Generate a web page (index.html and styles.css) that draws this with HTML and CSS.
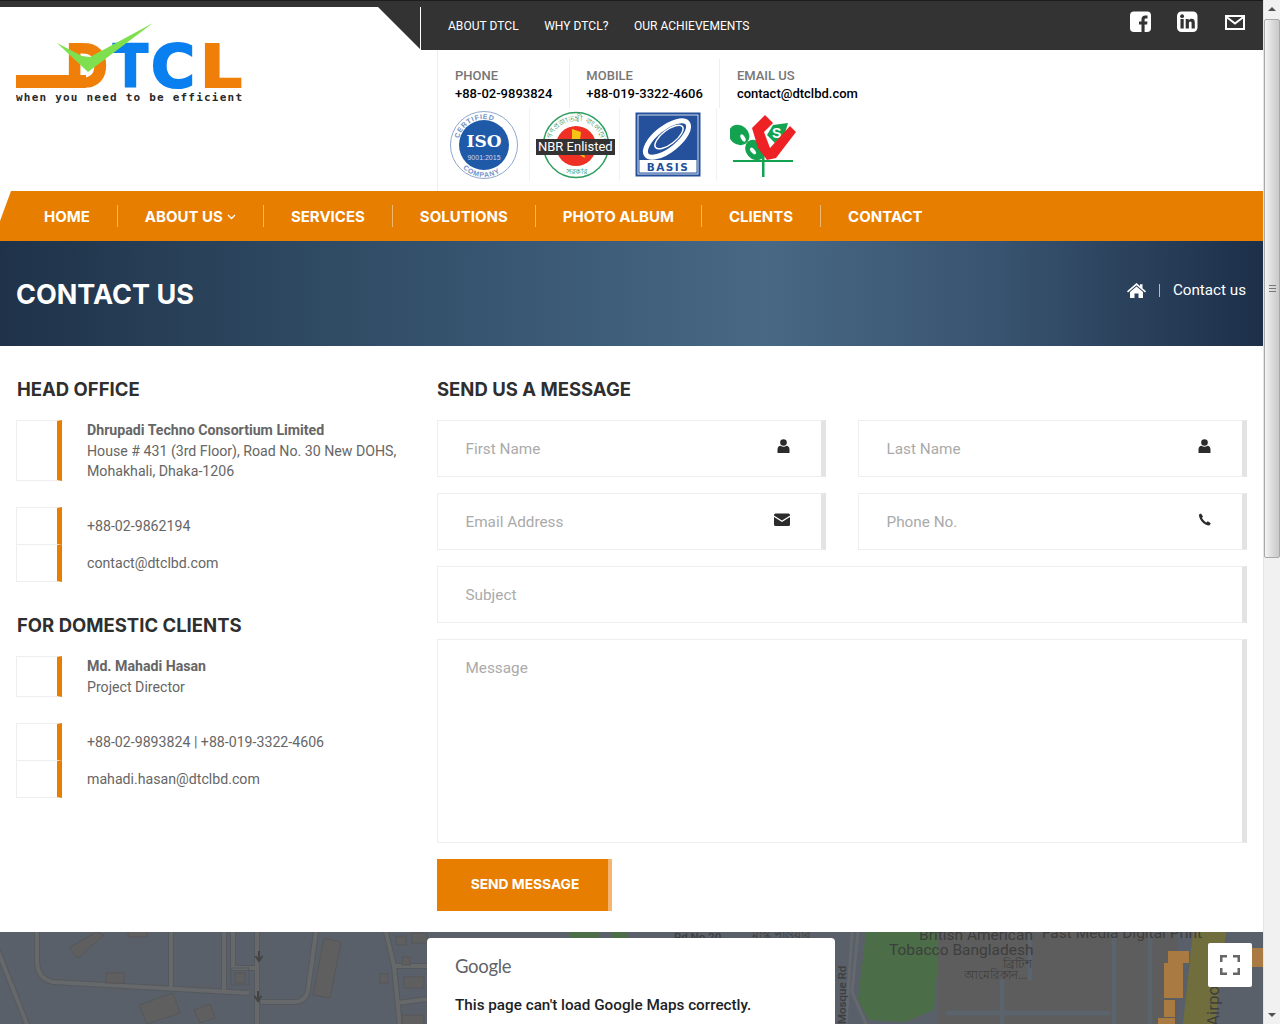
FILE: index.html
```html
<!DOCTYPE html>
<html lang="en">
<head>
<meta charset="utf-8">
<title>Contact Us - DTCL</title>
<link rel="stylesheet" href="styles.css">
</head>
<body>
<div class="page">
  <header class="header">
    <div class="brand-col">
      <div class="brand">
        <svg class="logo" width="240" height="90" viewBox="0 0 240 90">
          <rect x="0" y="52" width="70" height="13" fill="#f07f09"/>
          <text class="logo-letter logo-orange" x="49" y="64" textLength="43" lengthAdjust="spacingAndGlyphs">D</text>
          <text class="logo-letter logo-blue" x="97" y="64" textLength="35" lengthAdjust="spacingAndGlyphs">T</text>
          <text class="logo-letter logo-blue" x="135" y="64" textLength="44" lengthAdjust="spacingAndGlyphs">C</text>
          <text class="logo-letter logo-orange" x="184" y="64" textLength="42" lengthAdjust="spacingAndGlyphs">L</text>
          <polygon points="41,20 72,49 137,0 74,34 66,33" fill="#7fe04f"/>
          <text class="logo-tag" x="0" y="77.500" textLength="226">when you need to be efficient</text>
        </svg>
      </div>
    </div>
    <div class="header-main">
      <div class="topbar">
        <nav class="topnav">
          <a>ABOUT DTCL</a><a>WHY DTCL?</a><a>OUR ACHIEVEMENTS</a>
        </nav>
        <div class="social">
          <svg class="social-fb" width="22" height="22" viewBox="0 0 22 22"><rect width="21" height="20.500" y="0.500" rx="4" fill="#fff"/><path d="M11.500 21v-7.500H9v-3h2.500V8.300C11.500 5.800 13 4.500 15.200 4.500H17.500v3H16c-1.100 0-1.400.5-1.400 1.300v1.700h2.900l-.4 3h-2.500V21z" fill="#333"/></svg>
          <svg width="21" height="22" viewBox="0 0 21 22"><rect y="0.500" width="20.500" height="20.500" rx="4.500" fill="#fff"/><rect x="3.500" y="8" width="3.200" height="9.500" fill="#333"/><circle cx="5.100" cy="5.200" r="1.900" fill="#333"/><path d="M8.700 8h3v1.400c.7-1.100 1.700-1.600 2.900-1.600 2.300 0 3.200 1.500 3.200 3.900v5.800h-3.200v-5c0-1.100-.3-1.900-1.300-1.900s-1.400.9-1.400 1.900v5H8.700z" fill="#333"/></svg>
          <svg class="social-mail" width="20" height="15" viewBox="0 0 20 15"><rect x="1" y="1" width="18" height="13" fill="#333" stroke="#fff" stroke-width="2"/><path d="M1.500 2l8.500 6.500L18.500 2" fill="none" stroke="#fff" stroke-width="2"/></svg>
        </div>
      </div>
      <div class="contact-strip">
        <div class="info-row">
          <div class="info"><span class="info-label">PHONE</span><span class="info-value">+88-02-9893824</span></div>
          <div class="info info-mid"><span class="info-label">MOBILE</span><span class="info-value">+88-019-3322-4606</span></div>
          <div class="info"><span class="info-label">EMAIL US</span><span class="info-value">contact@dtclbd.com</span></div>
        </div>
        <div class="badges">
          <div class="badge badge-iso">
            <svg width="70" height="70" viewBox="0 0 70 70">
              <defs>
                <path id="isoTop" d="M9 35a26 26 0 0 1 52 0"/>
                <path id="isoBot" d="M5 37a30 30 0 0 0 60 0"/>
              </defs>
              <circle cx="35" cy="35" r="33.500" fill="#fff" stroke="#8fa8d0" stroke-width="1"/>
              <circle cx="35" cy="35" r="25" fill="#1f5aa8"/>
              <text class="iso-curve"><textPath href="#isoTop" startOffset="8%">CERTIFIED</textPath></text>
              <text class="iso-curve"><textPath href="#isoBot" startOffset="25%">COMPANY</textPath></text>
              <text class="iso-main" x="35" y="37" text-anchor="middle">ISO</text>
              <text class="iso-sub" x="35" y="50" text-anchor="middle">9001:2015</text>
            </svg>
          </div>
          <div class="badge badge-nbr">
            <svg width="80" height="70" viewBox="0 0 80 70">
              <defs>
                <path id="nbrTop" d="M15 37a26 26 0 0 1 52 0"/>
              </defs>
              <circle cx="41" cy="35" r="32.500" fill="#fff" stroke="#2e9e5e" stroke-width="1.500"/>
              <circle cx="41" cy="36" r="20" fill="#ee3124"/>
              <path d="M37 19l9 3-1 8 7 3-4 6 2 9-7-4-2-8-7-2 3-6z" fill="#f6c514"/>
              <text class="nbr-curve"><textPath href="#nbrTop" startOffset="10%">গণপ্রজাতন্ত্রী বাংলাদেশ</textPath></text>
              <text class="nbr-low" x="41" y="64" text-anchor="middle">সরকার</text>
            </svg>
            <span class="nbr-tag">NBR Enlisted</span>
          </div>
          <div class="badge badge-basis">
            <svg width="66" height="66" viewBox="0 0 66 66">
              <rect x="0.500" y="0.500" width="65" height="64" fill="#24509c"/>
              <rect x="3" y="3" width="60" height="59" fill="none" stroke="#fff" stroke-width=".8"/>
              <rect x="4.500" y="48" width="57" height="12.500" fill="#fff"/>
              <g fill="none" stroke="#fff">
                <ellipse cx="32" cy="27" rx="26" ry="11" transform="rotate(-38 32 27)" stroke-width="5"/>
                <ellipse cx="34" cy="25" rx="17" ry="7" transform="rotate(-38 34 25)" stroke-width="1.500"/>
              </g>
              <text class="basis-text" x="33" y="59" text-anchor="middle">BASIS</text>
            </svg>
          </div>
          <div class="badge badge-bcs">
            <svg width="66" height="66" viewBox="0 0 66 66">
              <ellipse cx="9" cy="23" rx="11" ry="9.500" transform="rotate(40 9 23)" fill="#13a24f"/>
              <ellipse cx="13" cy="26" rx="2" ry="4" transform="rotate(-30 13 26)" fill="#fff"/>
              <ellipse cx="25" cy="38" rx="11" ry="9" transform="rotate(50 25 38)" fill="#13a24f"/>
              <ellipse cx="23" cy="39" rx="2" ry="4" transform="rotate(-40 23 39)" fill="#fff"/>
              <polygon points="37,23 43,13 58,11 55,21 45,31" fill="#13a24f"/>
              <text class="bcs-s" x="42" y="26">S</text>
              <polygon points="22,16 35,3 43,11 34,20 40,36 60,14 66,20 46,46 37,48 28,36" fill="#ee2124"/>
              <rect x="3" y="48" width="60" height="2" fill="#13a24f"/>
              <rect x="32" y="44" width="2.500" height="21" fill="#13a24f"/>
            </svg>
          </div>
        </div>
      </div>
    </div>
  </header>

  <nav class="mainnav">
    <a>HOME</a>
    <a>ABOUT US <svg class="caret" width="9" height="6" viewBox="0 0 9 6"><path d="M1 1l3.500 3.500L8 1" fill="none" stroke="#fff" stroke-width="1.300"/></svg></a>
    <a>SERVICES</a>
    <a>SOLUTIONS</a>
    <a>PHOTO ALBUM</a>
    <a>CLIENTS</a>
    <a>CONTACT</a>
  </nav>

  <section class="hero">
    <h1>CONTACT US</h1>
    <div class="crumbs">
      <svg width="19" height="15" viewBox="0 0 19 15"><path d="M9.500 0L13 3V1.200h2.500v4L19 8.300l-1 1.100-8.500-7.200L1 9.400 0 8.300z" fill="#fff"/><path d="M9.500 3.500l6.500 5.400V15h-4.500v-4.500h-4V15H3V8.900z" fill="#fff"/></svg>
      <span class="crumb-sep"></span>
      <span>Contact us</span>
    </div>
  </section>

  <main class="content">
    <aside class="offices">
      <h2>HEAD OFFICE</h2>
      <div class="card">
        <div class="card-icon"></div>
        <div class="card-text"><b>Dhrupadi Techno Consortium Limited</b><br>House # 431 (3rd Floor), Road No. 30 New DOHS,<br>Mohakhali, Dhaka-1206</div>
      </div>
      <div class="stack">
        <div class="stack-row"><div class="card-icon"></div><div class="card-text">+88-02-9862194</div></div>
        <div class="stack-row"><div class="card-icon"></div><div class="card-text">contact@dtclbd.com</div></div>
      </div>
      <h2 class="second">FOR DOMESTIC CLIENTS</h2>
      <div class="card card-short">
        <div class="card-icon"></div>
        <div class="card-text"><b>Md. Mahadi Hasan</b><br>Project Director</div>
      </div>
      <div class="stack">
        <div class="stack-row"><div class="card-icon"></div><div class="card-text">+88-02-9893824 | +88-019-3322-4606</div></div>
        <div class="stack-row"><div class="card-icon"></div><div class="card-text">mahadi.hasan@dtclbd.com</div></div>
      </div>
    </aside>
    <section class="message">
      <h2>SEND US A MESSAGE</h2>
      <div class="form-grid">
        <div class="field"><span>First Name</span>
          <svg width="13" height="14" viewBox="0 0 13 14"><circle cx="6.500" cy="3.500" r="3.300" fill="#2b2b2b"/><path d="M.5 14V10.500C.5 8 2 7 3.500 6.800c1.700 1.300 4.300 1.300 6 0C11 7 12.500 8 12.500 10.500V14z" fill="#2b2b2b"/></svg>
        </div>
        <div class="field"><span>Last Name</span>
          <svg width="13" height="14" viewBox="0 0 13 14"><circle cx="6.500" cy="3.500" r="3.300" fill="#2b2b2b"/><path d="M.5 14V10.500C.5 8 2 7 3.500 6.800c1.700 1.300 4.300 1.300 6 0C11 7 12.500 8 12.500 10.500V14z" fill="#2b2b2b"/></svg>
        </div>
        <div class="field"><span>Email Address</span>
          <svg class="icon-mail" width="16" height="13" viewBox="0 0 16 13"><path d="M0 2a1.500 1.500 0 0 1 1.500-1.500h13A1.500 1.500 0 0 1 16 2v.5L8 7.500 0 2.500z" fill="#2b2b2b"/><path d="M0 4l8 5 8-5v7.500A1.500 1.500 0 0 1 14.500 13h-13A1.500 1.500 0 0 1 0 11.500z" fill="#2b2b2b"/></svg>
        </div>
        <div class="field"><span>Phone No.</span>
          <svg class="icon-phone" width="13" height="13" viewBox="0 0 13 13"><path d="M3 .5L1 1.500C.5 6 6 12.500 11.500 12.500l1.300-2.300-3-2-1.500 1.300C6.500 8.500 4.500 6.300 4 4.700L5 3.500z" fill="#2b2b2b"/></svg>
        </div>
        <div class="field wide"><span>Subject</span></div>
        <div class="field wide area"><span>Message</span></div>
      </div>
      <button class="send" type="button">SEND MESSAGE</button>
    </section>
  </main>

  <section class="map">
    <svg class="map-art" width="1263" height="92" viewBox="0 0 1263 92">
      <defs>
        <path id="roads" d="M-4 14L28 95M37 0V28Q37 47 53 50L249 61M171 0V55M224 0V59M233 0V36H257M257 0V95M261 70H294Q306 70 308 58L316 0M386 0L394 34L400 95M394 34H427M398 71L427 67"/>
      </defs>
      <use href="#roads" fill="none" stroke="#55595e" stroke-width="6"/>
      <use href="#roads" fill="none" stroke="#66686a" stroke-width="4"/>
      <g fill="#5f5f60" stroke="#56575a" stroke-width="1">
        <polygon points="69,16 96,0 104,3 78,26"/>
        <rect x="106" y="41" width="18" height="10"/>
        <rect x="128" y="-1" width="19" height="6"/>
        <polygon points="324,6 341,10 330,66 313,63"/>
        <polygon points="139,73 173,61 180,81 147,92"/>
        <polygon points="194,78 210,72 215,86 200,91"/>
        <rect x="235" y="41" width="10" height="10"/>
        <rect x="380" y="42" width="8" height="9"/>
        <rect x="396" y="4" width="10" height="9"/>
        <rect x="412" y="1" width="15" height="10"/>
        <rect x="402" y="25" width="8" height="8"/>
        <rect x="404" y="45" width="20" height="11"/>
        <rect x="402" y="83" width="22" height="10"/>
      </g>
      <rect x="231" y="36" width="18" height="17" fill="none" stroke="#55595e"/>
      <path d="M259 19v9M255.500 24l3.500 5 3.500-5M258 59v9M254.500 64l3.500 5 3.500-5" fill="none" stroke="#444" stroke-width="2"/>
      <path d="M569 0h31v6h-31zM612 0h16v6h-16z" fill="#4d6e48"/>
      <rect x="938" y="0" width="240" height="92" fill="#5d5d5d"/>
      <path d="M852 0L846 92M858 0L852 60L866 92" fill="none" stroke="#65696e" stroke-width="3"/>
      <polygon points="866,0 938,0 938,28 934,78 905,90 869,88 858,68" fill="#4b6d47"/>
      <path d="M946 81H1110M1002 48V92M1030 0V48M1114 0V92M1150 0V92" fill="none" stroke="#5b636d" stroke-width="5"/>
      <polygon points="1193,0 1226,0 1215,92 1183,92" fill="#706e3c"/>
      <g fill="#a97a42">
        <rect x="1168" y="19" width="21" height="12"/>
        <rect x="1164" y="31" width="19" height="35"/>
        <rect x="1164" y="68" width="11" height="17"/>
        <rect x="1158" y="86" width="17" height="6"/>
        <rect x="1248" y="16" width="15" height="19"/>
      </g>
      <g class="map-text">
        <text x="919" y="8" class="map-lg">British American</text>
        <text x="889" y="23" class="map-lg">Tobacco Bangladesh</text>
        <text x="1042" y="6" class="map-lg">Fast Media Digital Print</text>
        <text x="1003" y="36" class="map-md">ব্রিটিশ</text>
        <text x="964" y="47" class="map-md">আমেরিকান...</text>
        <text x="674" y="9" class="map-sm">Rd No 20</text>
        <text x="752" y="7" class="map-sm">মাস্ক পাওয়ার</text>
        <text class="map-sm" transform="translate(846 92) rotate(-90)">Mosque Rd</text>
        <text class="map-air" transform="translate(1219 94) rotate(-90)">Airpo</text>
      </g>
    </svg>
    <div class="map-dialog">
      <div class="google-word">Google</div>
      <p>This page can't load Google Maps correctly.</p>
    </div>
    <div class="map-full">
      <svg width="20" height="20" viewBox="0 0 20 20"><path d="M1.250 7V1.250H7M13 1.250h5.750V7M18.750 13v5.750H13M7 18.750H1.250V13" fill="none" stroke="#666" stroke-width="2.500"/></svg>
    </div>
  </section>
</div>
<div class="scrollbar">
  <div class="sb-arrow sb-up"></div>
  <div class="sb-thumb"><span></span></div>
  <div class="sb-arrow sb-down"></div>
</div>
</body>
</html>
```
FILE: styles.css
```css
* { box-sizing: border-box; }
html, body { margin: 0; height: 1024px; overflow: hidden; }
body { display: flex; background: #fff; font-family: Roboto, "Liberation Sans", sans-serif; color: #666; }
.page { width: 1263px; flex: none; height: 1024px; overflow: hidden; }
a { color: inherit; text-decoration: none; }

/* header */
.header { display: flex; height: 191px; }
.brand-col { width: 420px; flex: none; background: linear-gradient(#333 50px, #fff 50px); border-top: 1px solid #1c1c1c; padding-top: 6px; }
.brand { height: 184px; background: #fff; clip-path: polygon(0 0, 378px 0, 420px 42px, 420px 100%, 0 100%); padding: 16px 0 0 16px; }
.logo { display: block; }
.logo-letter { font: 700 59px "DejaVu Sans", sans-serif; stroke-width: 2px; stroke-linejoin: miter; }
.logo-orange { fill: #f07f09; stroke: #f07f09; }
.logo-blue { fill: #0a7fef; stroke: #0a7fef; }
.logo-tag { font: 700 11px "DejaVu Sans Mono", "Liberation Mono", monospace; fill: #2a2a2a; }
.header-main { flex: 1; min-width: 0; }
.topbar { height: 50px; background: #333; border-top: 1px solid #1c1c1c; display: flex; align-items: flex-start; justify-content: space-between; padding: 6px 18px 0 0; }
.topnav { display: flex; height: 43px; align-items: center; gap: 25.500px; border-left: 1px solid #fff; padding: 0 0 6px 27px; color: #fff; font-size: 12px; letter-spacing: .04px; }
.social { display: flex; gap: 26px; align-items: flex-start; padding-top: 4px; }
.social-fb { margin-right: -1px; }
.social-mail { margin-top: 4px; margin-left: 1px; }
.contact-strip { margin-left: 17px; border-left: 1px solid #eee; height: 141px; }
.info-row { display: flex; height: 58px; padding-top: 9px; }
.info { display: flex; flex-direction: column; padding: 8px 17px 0 17px; border-left: 1px solid #eee; font-size: 13px; line-height: 17px; }
.info:first-child { border-left: 0; }
.info-mid { padding-left: 16px; padding-right: 16px; }
.info-value { color: #000; font-weight: 500; margin-top: 1px; }
.info-label { font-weight: 500; color: #777; }
.badges { display: flex; height: 73px; }
.badge { position: relative; display: flex; align-items: center; justify-content: center; border-right: 1px solid #f2f2f2; }
.badge-iso { width: 92px; }
.badge-nbr { width: 90px; }
.badge-basis { width: 97px; }
.badge-bcs { width: 92px; border-right: 0; justify-content: flex-start; padding-left: 13px; }
.nbr-tag { position: absolute; left: 6px; top: 31px; background: #333; color: #fff; font-size: 13px; line-height: 16px; padding: 0 2px; white-space: nowrap; }
.iso-curve { font: 700 7px "Liberation Sans", sans-serif; fill: #6f8fc5; letter-spacing: .8px; }
.iso-main { font: 700 17px "DejaVu Serif", "Liberation Serif", serif; fill: #fff; }
.iso-sub { font: 400 7px "Liberation Sans", sans-serif; fill: #cfd9ea; }
.nbr-curve { font: 400 7.500px "Noto Sans", sans-serif; fill: #1f8f50; }
.nbr-low { font: 400 8px "Noto Sans", sans-serif; fill: #1f8f50; }
.basis-text { font: 700 10.500px "DejaVu Sans", sans-serif; fill: #24509c; letter-spacing: 1.500px; }
.bcs-s { font: 700 14px "Liberation Sans", sans-serif; fill: #fff; }

/* main nav */
.mainnav { height: 50px; background: #e87e00; clip-path: polygon(11px 0, 100% 0, 100% 100%, 0 100%, 0 30px); display: flex; align-items: center; padding-left: 17px; }
.mainnav a { display: flex; align-items: center; gap: 4px; height: 22px; padding: 0 27px; color: #fff; font: 700 15px Inter, "Liberation Sans", sans-serif; border-left: 1px solid rgba(255,255,255,.45); white-space: nowrap; }
.mainnav a:first-child { border-left: 0; }
.caret { margin-top: 1px; }

/* hero */
.hero { height: 105px; display: flex; align-items: center; justify-content: space-between; padding: 0 17px 0 16px; color: #fff;
  background: linear-gradient(90deg, #1f3249 0, #2a435b 220px, #375570 480px, #486883 765px, #38536f 1000px, #1d2f49 1263px); }
.hero h1 { margin: 2px 0 0; font: 700 27px Inter, "Liberation Sans", sans-serif; }
.crumbs { display: flex; align-items: center; font-size: 15.200px; margin-bottom: 8px; }
.crumbs svg { margin-top: 2px; }
.crumb-sep { width: 1px; height: 13px; background: #e8b27a; margin: 1px 13px 0 13px; }

/* content */
.content { display: flex; padding: 0 16px; height: 586px; }
.offices { width: 421px; flex: none; }
.offices h2, .message h2 { margin: 32px 0 20px; font: 700 18.500px/22px Inter, "Liberation Sans", sans-serif; color: #2f2f2f; }
.offices h2 { margin-left: 1px; }
.offices h2.second { margin: 32px 0 20px 1px; }
.card { display: flex; height: 61px; margin-bottom: 26px; }
.card-short { height: 41px; }
.card-icon { width: 46px; flex: none; align-self: stretch; border: 1px solid #eee; border-right: 5px solid #e87e00; }
.card-text { padding-left: 25px; font-size: 14.170px; line-height: 20.600px; color: #666; }
.card-text b { font-weight: 700; }
.stack { margin-bottom: 31px; }
.stack-row { display: flex; height: 37.500px; align-items: stretch; }
.stack-row .card-text { line-height: 37.500px; }
.stack-row:first-child .card-text { padding-top: 1px; }
.stack-row + .stack-row .card-icon { border-top: 0; }
.message { width: 810px; flex: none; }
.form-grid { display: grid; grid-template-columns: 389px 389px; gap: 16px 32px; }
.field { height: 57px; display: flex; align-items: center; justify-content: space-between; padding: 0 31px 0 27.500px; border: 1px solid #eee; border-right: 5px solid #e3e3e3; color: #aaa; font-size: 15.300px; }
.field svg { margin-top: -5px; }
.wide { grid-column: 1 / 3; }
.area { height: 204px; align-items: flex-start; padding-top: 19px; }
.send { display: block; margin-top: 16px; width: 175px; height: 52px; border: 0; border-right: 4px solid #f6b56f; background: #e87e00; color: #fff; font: 700 13.800px Inter, "Liberation Sans", sans-serif; padding: 0 0 2px 5px; }

/* map */
.map { position: relative; height: 92px; overflow: hidden; background: #5a6069; }
.map-art { display: block; }
.map-text text { fill: #3e3e3e; font-family: Roboto, "Noto Sans", sans-serif; }
.map-lg { font-size: 15.500px; }
.map-air { font-size: 17px; }
.map-md { font-size: 11.500px; }
.map-sm { font-size: 11.500px; font-weight: 500; }
.map-dialog { position: absolute; left: 427px; top: 6px; width: 408px; height: 110px; background: #fff; border-radius: 4px 4px 0 0; padding: 17px 28px; }
.google-word { font: 400 18.500px Lato, "Open Sans", sans-serif; color: #5f6368; line-height: 22px; letter-spacing: -.3px; }
.map-dialog p { margin: 19px 0 0; color: #202124; font: 500 15.250px/18px Roboto, sans-serif; }
.map-full { position: absolute; left: 1208px; top: 11px; width: 44px; height: 44px; background: #fff; border-radius: 2px; display: flex; align-items: center; justify-content: center; }

/* scrollbar */
.scrollbar { width: 17px; flex: none; height: 1024px; background: #f1f1f1; border-left: 1px solid #e4e4e4; position: relative; display: flex; flex-direction: column; }
.sb-arrow { height: 19px; flex: none; position: relative; }
.sb-up::after, .sb-down::after { content: ""; position: absolute; left: 4px; border-left: 4px solid transparent; border-right: 4px solid transparent; }
.sb-up::after { top: 7px; border-bottom: 4px solid #505050; }
.sb-down::after { bottom: 7px; border-top: 4px solid #505050; }
.sb-thumb { height: 539px; flex: none; background: linear-gradient(90deg, #f4f4f4, #dcdcdc 50%, #c9c9c9); border: 1px solid #a8a8a8; border-radius: 2px; display: flex; align-items: center; justify-content: center; }
.sb-thumb span { width: 7px; height: 7px; background: repeating-linear-gradient(#777 0 1px, transparent 1px 3px); }
.sb-down { margin-top: auto; }
```
